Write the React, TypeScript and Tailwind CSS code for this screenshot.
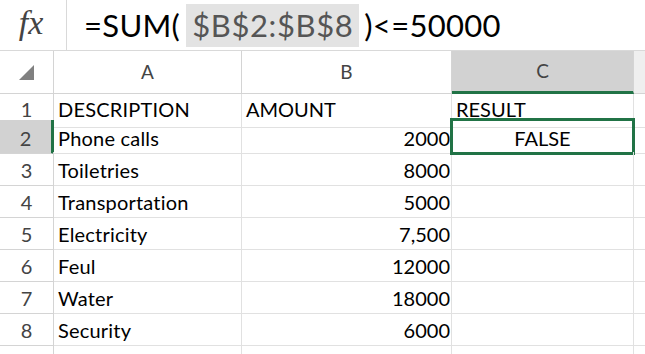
import React from 'react';

const rows = [
  { n: 1, a: 'DESCRIPTION', b: 'AMOUNT', c: 'RESULT', head: true },
  { n: 2, a: 'Phone calls', b: '2000', c: 'FALSE' },
  { n: 3, a: 'Toiletries', b: '8000', c: '' },
  { n: 4, a: 'Transportation', b: '5000', c: '' },
  { n: 5, a: 'Electricity', b: '7,500', c: '' },
  { n: 6, a: 'Feul', b: '12000', c: '' },
  { n: 7, a: 'Water', b: '18000', c: '' },
  { n: 8, a: 'Security', b: '6000', c: '' },
];

const font = { fontFamily: 'Lato, "Open Sans", sans-serif' };

const App = () => {
  return (
    <div className="w-[645px] h-[354px] bg-white overflow-hidden text-black" style={font}>
      {/* formula bar */}
      <div className="flex h-[51px] border-b border-[#d9d9d9]">
        <div className="w-[67px] border-r border-[#d9d9d9] flex items-center justify-center">
          <span
            className="text-[34px] italic text-[#444] pb-[6px] pr-[4px]"
            style={{ fontFamily: '"Liberation Serif", "DejaVu Serif", serif' }}
          >
            fx
          </span>
        </div>
        <div className="flex items-center pl-[17px] text-[31px] leading-none tracking-[0.3px]">
          <span>=SUM(</span>
          <span className="ml-[6px] bg-[#e3e3e3] text-[#555] px-[6px] h-[43px] flex items-center tracking-[0.6px]">$B$2:$B$8</span>
          <span className="ml-[5px]">)&lt;=50000</span>
        </div>
      </div>

      {/* column headers */}
      <div className="grid grid-cols-[54px_188px_210px_182px_1fr] h-[43px] text-[19px] text-[#444]">
        <div className="border-r border-b border-[#d4d4d4] flex items-center justify-center">
          <svg width="16" height="16" viewBox="0 0 16 16" className="mt-[2px]">
            <polygon points="15,0 15,15 0,15" fill="#808080" />
          </svg>
        </div>
        <div className="border-r border-b border-[#d4d4d4] flex items-center justify-center">A</div>
        <div className="border-r border-b border-[#d4d4d4] flex items-center justify-center">B</div>
        <div className="border-r border-[#d4d4d4] bg-[#d2d2d2] border-b-[3px] border-b-[#217346] flex items-center justify-center">C</div>
        <div className="border-b border-[#d4d4d4] bg-[#efefef]"></div>
      </div>

      {/* rows */}
      {rows.map((r) => {
        const pad = r.head ? 'pb-[3px]' : 'pt-[3px]';
        return (
          <div
            key={r.n}
            className={`grid grid-cols-[54px_188px_210px_182px_1fr] text-[20px] ${r.head ? 'h-[26px]' : 'h-[32px]'}`}
          >
            <div
              className={
                r.n === 2
                  ? `bg-[#d2d2d2] border-r-[3px] border-r-[#217346] border-b border-b-[#d4d4d4] flex items-center justify-center text-[#444] ${pad}`
                  : `border-r border-b border-[#d4d4d4] flex items-center justify-center text-[#444] ${pad}`
              }
            >
              {r.n}
            </div>
            <div className={`border-r border-b border-[#e1e1e1] flex items-center pl-[4px] leading-none tracking-[0.2px] ${pad}`}>
              {r.a}
            </div>
            <div
              className={`border-r border-b border-[#e1e1e1] flex items-center leading-none ${pad} ${
                r.head ? 'pl-[4px]' : 'justify-end pr-[1px]'
              }`}
            >
              {r.b}
            </div>
            <div
              className={`relative border-r border-b border-[#e1e1e1] flex items-center leading-none ${pad} ${
                r.head ? 'pl-[4px]' : 'justify-center'
              }`}
            >
              {r.c}
              {r.n === 2 && (
                <div className="absolute -top-[2px] -bottom-[2px] -left-[2px] -right-[2px] border-[3px] border-[#217346]" />
              )}
            </div>
            <div className="border-b border-[#e1e1e1]"></div>
          </div>
        );
      })}
      <div className="grid grid-cols-[54px_188px_210px_182px_1fr] h-[32px]">
        <div className="border-r border-[#d4d4d4]"></div>
        <div className="border-r border-[#e1e1e1]"></div>
        <div className="border-r border-[#e1e1e1]"></div>
        <div className="border-r border-[#e1e1e1]"></div>
        <div></div>
      </div>
    </div>
  );
};

export default App;
